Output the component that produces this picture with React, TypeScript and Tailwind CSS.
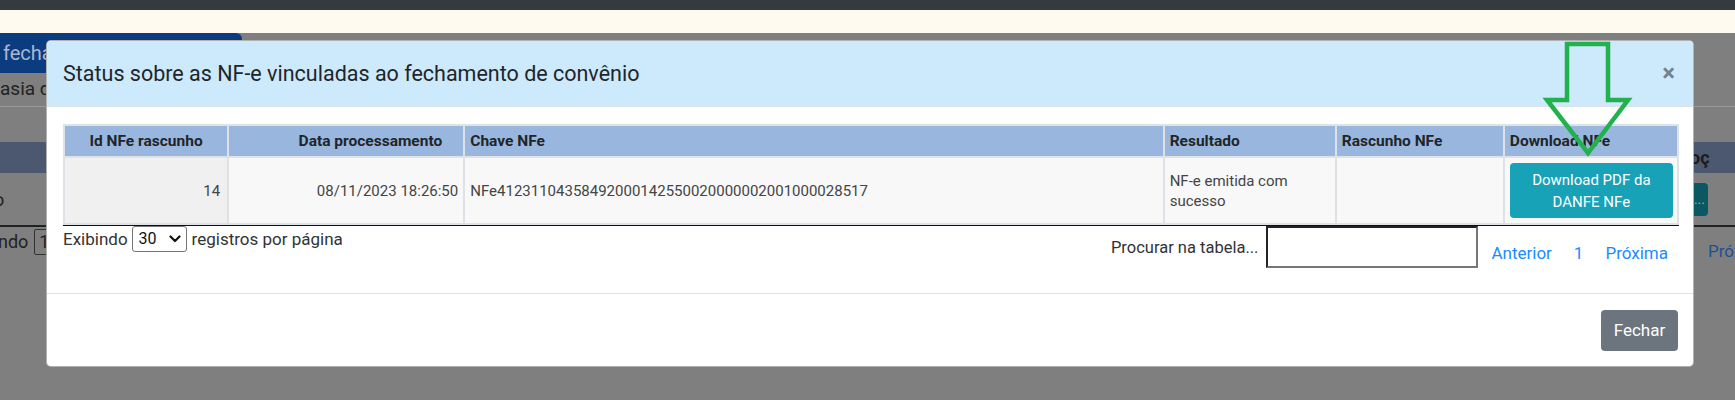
import React from "react";

function Chevron() {
  return (
    <svg width="12" height="8" viewBox="0 0 12 8" className="block">
      <polyline points="1.5,1.5 6,6 10.5,1.5" fill="none" stroke="#111" strokeWidth="2.2" strokeLinecap="round" strokeLinejoin="round" />
    </svg>
  );
}

function Background() {
  return (
    <div className="flex flex-col">
      <div className="h-[10px] bg-[#343a40]" />
      <div className="h-[23px] bg-[#fffaf0]" />
      <div className="h-[40px] flex">
        <div className="w-[242px] h-full bg-[#0c3c80] rounded-tr-[6px] flex items-center pl-[3px] text-[20px] text-[#a9b8d0] whitespace-nowrap overflow-hidden">
          fechamento de convênio
        </div>
      </div>
      <div className="h-[34px] flex items-center border-b border-[#9a9a9a] text-[19px] text-[#222] whitespace-nowrap">
        asia dos
      </div>
      <div className="h-[35px]" />
      <div className="h-[31px] bg-[#4c5870] flex justify-end items-center">
        <div className="w-[45px] text-[18px] font-bold text-[#1b1b1b] whitespace-nowrap">oç</div>
      </div>
      <div className="h-[52px] flex justify-between items-center">
        <div className="text-[18px] text-[#222] -ml-[6px]">o</div>
        <div className="w-[75px] flex">
          <div className="w-[48px] h-[33px] bg-[#0b5862] rounded-r-[4px] flex items-center justify-end pr-[3px] text-[#9ab] text-[14px]">...</div>
        </div>
      </div>
      <div className="h-[2px] bg-[#222]" />
      <div className="h-[40px] flex justify-between items-start">
        <div className="flex items-center pt-[1px] text-[18px] text-[#222]">
          <span className="-ml-[2px]">ndo</span>
          <div className="ml-[6px] w-[30px] h-[26px] border border-[#333] rounded-[2px] pl-[4px] leading-[24px]">1</div>
        </div>
        <div className="w-[27px] pt-[12px] text-[17px] text-[#1d4f91] whitespace-nowrap">Próx</div>
      </div>
    </div>
  );
}

function Modal() {
  return (
    <div className="absolute left-[46px] top-[40px] w-[1648px] h-[327px] bg-white border border-black/30 rounded-[5px] overflow-hidden flex flex-col">
      <div className="h-[66px] bg-[#cde9fc] border-b border-[#dee2e6] flex items-center justify-between pl-[16px] pr-[18px]">
        <h5 className="text-[21.5px] leading-[30px] text-[#212529] font-normal">
          Status sobre as NF-e vinculadas ao fechamento de convênio
        </h5>
        <span className="text-[24px] leading-none font-bold text-black/45 -mt-[2px]">×</span>
      </div>
      <div className="h-[186px] pl-[16px] pt-[17px]">
        <table className="w-[1616px] table-fixed border-separate border-spacing-[2px] bg-[#dee2e6] border-b border-[#111]">
          <thead>
            <tr className="bg-[#99b7de] text-[15.5px] font-bold text-[#212529] leading-[22px]">
              <th className="w-[162px] py-[4px] text-center">Id NFe rascunho</th>
              <th className="w-[234px] py-[4px] pr-[21px] text-right">Data processamento</th>
              <th className="w-[697px] py-[4px] pl-[5px] text-left">Chave NFe</th>
              <th className="w-[170px] py-[4px] pl-[5px] text-left">Resultado</th>
              <th className="w-[166px] py-[4px] pl-[5px] text-left">Rascunho NFe</th>
              <th className="w-[172px] py-[4px] pl-[5px] text-left">Download NFe</th>
            </tr>
          </thead>
          <tbody>
            <tr className="text-[15px] leading-[20px] text-[#444]">
              <td className="h-[65px] bg-[#f0f0f0] pr-[7px] text-right align-middle">14</td>
              <td className="bg-[#f8f8f8] pr-[5px] text-right align-middle">08/11/2023 18:26:50</td>
              <td className="bg-[#f8f8f8] pl-[5px] text-left align-middle">NFe41231104358492000142550020000002001000028517</td>
              <td className="bg-[#f8f8f8] pl-[5px] pr-[5px] text-left align-middle">NF-e emitida com sucesso</td>
              <td className="bg-[#f8f8f8]" />
              <td className="bg-[#f8f8f8] pl-[5px] align-middle">
                <div className="w-[163px] h-[55px] bg-[#17a2b8] rounded-[4px] flex items-center justify-center px-[12px] text-center text-white text-[15px] leading-[22px]">
                  Download PDF da DANFE NFe
                </div>
              </td>
            </tr>
          </tbody>
        </table>
        <div className="w-[1616px] flex justify-between items-start text-[17px] leading-[24px]">
          <div className="flex items-center text-[#333]">
            <span>Exibindo</span>
            <div className="ml-[4px] w-[55px] h-[26px] border border-[#767676] rounded-[3px] bg-white flex items-center justify-between pl-[6px] pr-[5px] text-[16px]">
              <span className="text-[#111]">30</span>
              <Chevron />
            </div>
            <span className="ml-[5px]">registros por página</span>
          </div>
          <div className="flex items-start">
            <span className="pt-[10px] text-[#333] text-[16.5px]">Procurar na tabela...</span>
            <div className="ml-[8px] w-[212px] h-[42px] bg-white border-2 border-t-[#222] border-l-[#222] border-r-[#767676] border-b-[#767676]" />
            <div className="ml-[2px] pt-[15px] flex text-[#1a8cff] text-[17px]">
              <span className="px-[11px]">Anterior</span>
              <span className="px-[11px]">1</span>
              <span className="px-[11px]">Próxima</span>
            </div>
          </div>
        </div>
      </div>
      <div className="flex-1 border-t border-[#dee2e6] flex justify-end items-start pt-[16px] pr-[15px]">
        <div className="w-[77px] h-[41px] bg-[#6c757d] rounded-[4px] flex items-center justify-center text-white text-[17px]">Fechar</div>
      </div>
    </div>
  );
}

function Arrow() {
  return (
    <svg className="absolute left-0 top-0 pointer-events-none" width="1735" height="400" viewBox="0 0 1735 400">
      <polygon
        points="1567,44 1608,44 1608,100 1628,100 1588,153 1547,100 1567,100"
        fill="none"
        stroke="#22b14c"
        strokeWidth="4.5"
        strokeLinejoin="miter"
      />
    </svg>
  );
}

export default function App() {
  return (
    <div className="relative w-[1735px] h-[400px] overflow-hidden bg-[#7f7f7f] [font-family:Roboto,'Noto_Sans',sans-serif]">
      <Background />
      <Modal />
      <Arrow />
    </div>
  );
}
